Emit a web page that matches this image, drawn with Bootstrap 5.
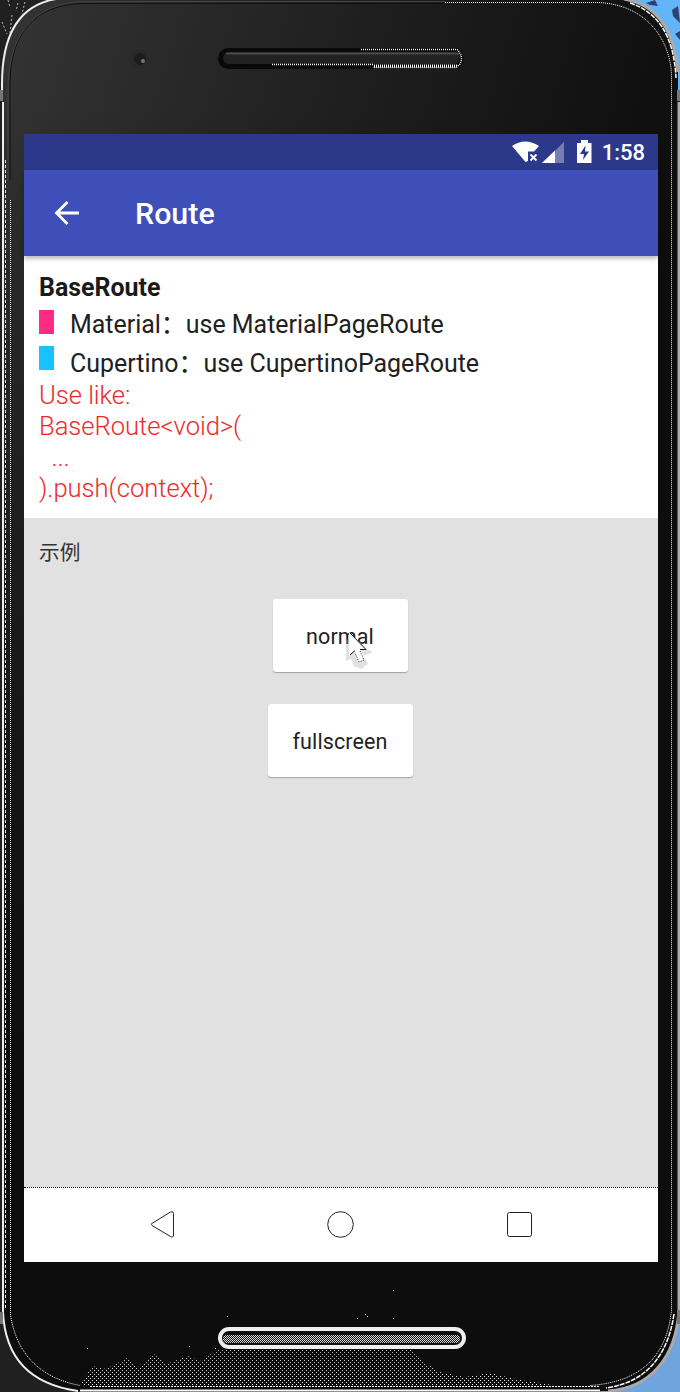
<!DOCTYPE html>
<html lang="en">
<head>
<meta charset="utf-8">
<meta name="viewport" content="width=device-width, initial-scale=1">
<title>Route</title>
<link href="https://cdn.jsdelivr.net/npm/bootstrap@5.3.0/dist/css/bootstrap.min.css" rel="stylesheet">
<style>
body{font-family:Roboto,"Noto Sans CJK SC",sans-serif;background:#202020;width:680px;height:1392px;overflow:hidden}
.phone{width:680px;height:1392px;padding:134px 22px 130px 24px}
.shell{left:0;top:0;z-index:0}
.screen{z-index:1;background:#e1e1e1;height:1128px}
.status{height:36px;background:#2c3889;color:#fff;padding-right:13px}
.clock{font-size:22px;font-weight:500;line-height:36px;margin-left:8px;padding-top:2px}
.appbar{height:86px;background:#3e4fba;color:#fff;padding-left:30px;box-shadow:0 3px 4px 0 rgba(0,0,0,.25);z-index:2}
.title{font-size:30.4px;font-weight:500;line-height:36px;margin:2px 0 0 55px}
.intro{height:262px;padding:16px 15px 0;font-size:24.95px;color:#212121}
.intro-title{font-weight:700;line-height:32px;color:#1a1a1a}
.swatch{width:15px;height:24px;flex:none;margin-top:6px}
.entry{line-height:37px;height:36px;white-space:pre}
.entry + .entry{height:40px}
.entry-text{margin-left:16px;padding-top:2px}
.entry + .entry .entry-text{padding-top:5px}
.usage{font-size:25.6px;font-weight:300;line-height:31px;color:#f02828;white-space:pre;letter-spacing:-.03px}
.sample{padding:17px 15px 0;font-size:20.7px;line-height:36px;color:#333}
.choices{gap:32px;padding:28px 2px 0 0}
.tile-btn{height:73px;background:#fff;border:0;border-radius:3px;font-size:21.5px;font-weight:400;letter-spacing:.1px;color:#222;box-shadow:0 1px 1px rgba(0,0,0,.28);padding:4px 0 0}
.tile-btn:hover{background:#fff;color:#222}
.navkeys{height:75px;background:#fff;border-top:1px dotted #111;padding-left:126px}
.pointer-icon{left:72px;top:32px}
</style>
</head>
<body>
<div class="phone position-relative">
<svg class="shell position-absolute" width="680" height="1392" viewBox="0 0 680 1392" fill="none">
  <defs>
    <linearGradient id="face" x1="0" y1="0" x2="680" y2="200" gradientUnits="userSpaceOnUse"><stop offset="0" stop-color="#343434"/><stop offset=".55" stop-color="#1d1d1d"/><stop offset="1" stop-color="#0d0d0d"/></linearGradient>
    <linearGradient id="shade" x1="0" y1="100" x2="0" y2="1100" gradientUnits="userSpaceOnUse"><stop offset="0" stop-color="#0d0d0d" stop-opacity="0"/><stop offset="1" stop-color="#0d0d0d"/></linearGradient>
    <pattern id="dots" width="4" height="4" patternUnits="userSpaceOnUse"><path d="M0 0h1v1H0zM2 2h1v1H2z" fill="#fff"/></pattern>
    <pattern id="check" width="2" height="2" patternUnits="userSpaceOnUse"><path d="M0 0h1v1H0zM1 1h1v1H1z" fill="#ddd"/></pattern>
    <linearGradient id="fade" x1="0" y1="1345" x2="0" y2="1386" gradientUnits="userSpaceOnUse"><stop offset="0" stop-color="#fff" stop-opacity=".6"/><stop offset="1" stop-color="#fff"/></linearGradient>
    <mask id="glow"><path d="M92 1366L106 1369L127 1358L140 1368L154 1354L166 1364L188 1356L200 1361L218 1349H412L424 1362L440 1372L465 1377L490 1373L520 1380L560 1386H80z" fill="url(#fade)"/></mask>
  </defs>
  <path d="M600 0h80v90h-80z" fill="#62b6f8"/>
  <path d="M646 3l9-3 3 6-8-1zM672 10l6-4 2 17-7-7zM662 26l6 3-2 4zM675 34l5-3v9z" fill="#31406f"/>
  <path d="M8 0l2 7M18 3l-2 8M2 22l5 12M12 15l-2 18M25 2l-3 12" stroke="#bbb" stroke-dasharray="2 2"/>
  <path d="M640 1300h40v92h-80z" fill="#70a4dc"/>
  <path d="M2 70C5 30 24 3 58-1H622C656 3 675 30 678 70V1312C676 1356 655 1386 610 1391H80C29 1386 5 1356 3 1312z" fill="url(#face)"/>
  <path d="M2 70C5 30 24 3 58-1H622C656 3 675 30 678 70V1312C676 1356 655 1386 610 1391H80C29 1386 5 1356 3 1312z" fill="url(#shade)"/>
  <path d="M2 92V84C2 34 20 5 56-1M3 102V1312C5 1356 28 1384 78 1391" stroke="#eee" stroke-width="2"/>
  <path d="M624-1C655 4 674 28 678 72M679 102V1310C676 1358 650 1388 608 1391" stroke="#aaa" stroke-width="3"/>
  <path d="M630 3C658 12 674 36 676 78M674 1314C668 1354 648 1382 606 1388" stroke="#fff" stroke-width="1.5" stroke-dasharray="5 1"/>
  <path d="M0 90h3v11H0zM0 1312h3v12H0zM677 90h3v11h-3zM677 1310h3v14h-3z" fill="#777"/>
  <path d="M10 180V84C10 35 33 5 82 3.500H445" stroke="#111" stroke-width="1"/>
  <path d="M8 180V90C8 36 32 5 80 1.500H445" stroke="#444"/>
  <path d="M445 2.500H597C648 4 671 42 671.500 76V1310C667 1356 641 1382 590 1385.500" stroke="#fff" stroke-dasharray="1 1"/>
  <path d="M10.500 200V1315C16 1350 36 1377 80 1385.500" stroke="#fff" stroke-dasharray="1 1"/>
  <path d="M5.500 160V1310" stroke="#ddd" stroke-dasharray="3 2"/>
  <path d="M80 1390.500H600" stroke="#fff" stroke-width="2"/>
  <path d="M90 1386.500H600" stroke="#fff" stroke-dasharray="2 1"/>
  <circle cx="139" cy="59" r="11" fill="#292929" stroke="#303030"/><circle cx="140" cy="59" r="6" fill="#1c1c1c"/><circle cx="143" cy="61" r="2" fill="#777"/>
  <rect x="218" y="48" width="246" height="21" rx="10.500" fill="#090909"/>
  <rect x="223" y="52" width="237" height="12" rx="6" fill="#222"/><path d="M226 53.500H459" stroke="#4b4b4b" stroke-width="2"/>
  <path d="M361 49.500H457Q464 56 460 64L456 67.500H373M272 64.500H373" stroke="#fff" stroke-width="1.500" stroke-dasharray="1 1"/>
  <path d="M374 66H457" stroke="#fff" stroke-width="3" stroke-dasharray="1 1"/>
  <path d="M80 1350H600V1387H80z" fill="url(#dots)" mask="url(#glow)"/>
  <rect x="220" y="1329" width="244" height="18" rx="9" fill="#111" stroke="#eee" stroke-width="4"/>
  <path d="M229 1333.500H455" stroke="#080808" stroke-width="2"/><rect x="223" y="1335" width="237" height="8" rx="4" fill="url(#check)"/>
  <path d="M393 1290h1v1h-1zM365 1314h1v1h-1zM367 1316h1v1h-1zM227 1316h1v1h-1zM357 1318h1v1h-1zM393 1318h1v1h-1zM215 1348h1v1h-1zM189 1346h1v1h-1zM87 1348h1v1h-1z" fill="#fff"/>
</svg>
<main class="screen position-relative d-flex flex-column">
  <div class="status d-flex justify-content-end align-items-center">
    <svg width="82" height="24" viewBox="512 140 82 24" fill="#fff">
      <path d="M512 146Q525 137 539 146L534 151.500H528V161L525.500 162z"/><path d="M530.500 154.500l6 6m0-6l-6 6" stroke="#fff" stroke-width="1.800"/>
      <path d="M564 142V163H542z" opacity=".35"/><path d="M555 150.500V163H542z"/>
      <path d="M581 140h7v3h3.500v20h-14.500v-20H581z"/><path d="M585.500 145.500L580 154h4l-1 6 6-8.500h-4z" fill="#2c3889"/>
    </svg>
    <span class="clock">1:58</span>
  </div>
  <header class="appbar d-flex align-items-center position-relative">
    <svg width="26" height="26" viewBox="0 0 26 26" fill="none" stroke="#fff" stroke-width="2.800"><path d="M25 13H3M13.500 2L2.500 13L13.500 24"/></svg>
    <h1 class="title">Route</h1>
  </header>
  <section class="intro bg-white">
    <div class="intro-title">BaseRoute</div>
    <div class="entry d-flex"><span class="swatch" style="background:#ff2b80"></span><span class="entry-text">Material：use MaterialPageRoute</span></div>
    <div class="entry d-flex"><span class="swatch" style="background:#14c3ff"></span><span class="entry-text">Cupertino：use CupertinoPageRoute</span></div>
    <div class="usage">Use like:
BaseRoute&lt;void&gt;(
  ...
).push(context);</div>
  </section>
  <section class="flex-grow-1">
    <div class="sample" lang="zh">示例</div>
    <div class="choices d-flex flex-column align-items-center">
      <button class="btn tile-btn position-relative" style="width:135px">normal<svg class="pointer-icon position-absolute" width="32" height="42" viewBox="0 0 32 42" fill="none" aria-hidden="true">
        <path d="M1 8V30L6 28 9 35 16 38 23 33 19 25 28 21 20 17z" fill="#aaa" opacity=".35"/>
        <path d="M4 1V25L10 20 14 31 20 28 16 19H23z" fill="#fff"/>
        <path d="M5 2L21 18.500H15M5 24L10 19.500" stroke="#111"/><path d="M15 20L19 29L14 31L10 22" stroke="#222" stroke-dasharray="1 1.500"/>
      </svg></button>
      <button class="btn tile-btn" style="width:145px">fullscreen</button>
    </div>
  </section>
  <nav class="navkeys d-flex align-items-center">
    <svg width="26" height="28" viewBox="0 0 26 28" fill="none" stroke="#222"><path d="M1.500 12.700L20.500 1Q23.500 0 23.500 2.500V24Q23.500 27 20.500 25.500L2 14.500Q1 13.600 1.500 12.700z"/></svg>
    <svg width="28" height="28" viewBox="0 0 28 28" fill="none" stroke="#222" style="margin-left:151px"><circle cx="13.500" cy="13.500" r="12.800"/></svg>
    <svg width="26" height="28" viewBox="0 0 26 28" fill="none" stroke="#222" style="margin-left:152px"><rect x=".5" y="1.500" width="24" height="24" rx="2"/></svg>
  </nav>
</main>
</div>
<script src="https://cdn.jsdelivr.net/npm/bootstrap@5.3.0/dist/js/bootstrap.bundle.min.js"></script>
</body>
</html>
